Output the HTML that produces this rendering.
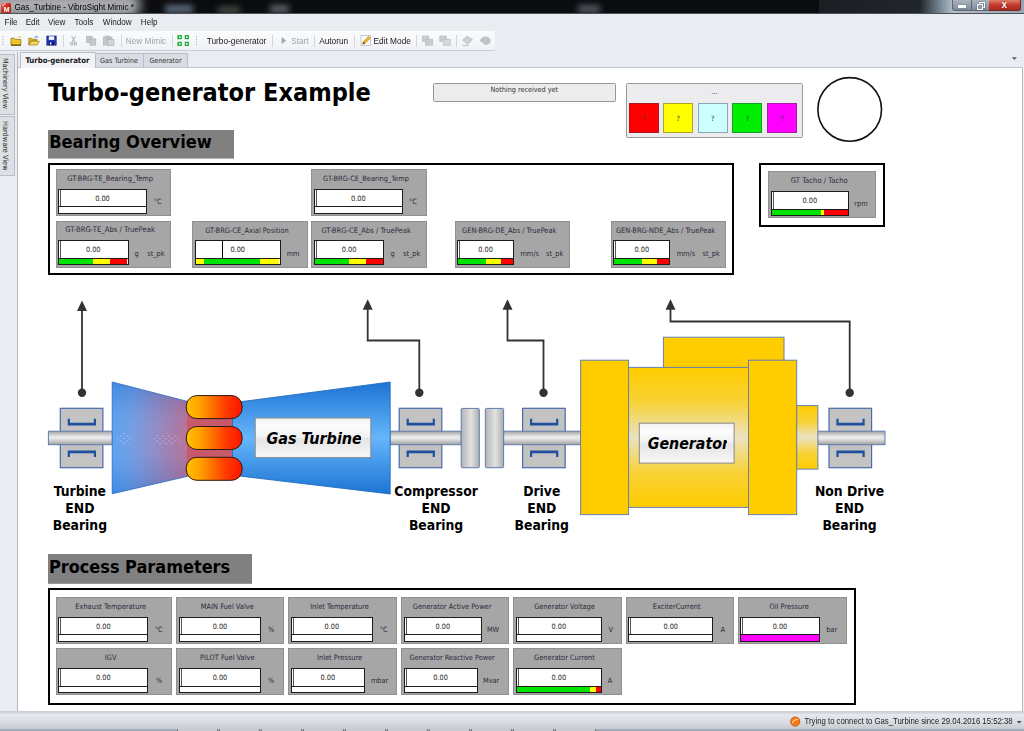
<!DOCTYPE html>
<html><head><meta charset="utf-8"><title>Gas_Turbine - VibroSight Mimic</title>
<style>
html,body{margin:0;padding:0}
body{width:1024px;height:731px;position:relative;overflow:hidden;background:#fff;font-family:"Liberation Sans","DejaVu Sans",sans-serif;font-size:11px;color:#222}
.a,.t,.wg,.vb,.br,.br i,.vl{position:absolute}
.t{white-space:pre}
svg{position:absolute;left:0;top:0}
#titlebar{left:0;top:0;width:1024px;height:14px;background:#0b0c0f;overflow:hidden}
#menubar{left:0;top:14px;width:1024px;height:17px;background:#e9ecf0}
#toolrow{left:0;top:31px;width:1024px;height:21px;background:#e9ecf0}
#toolbar{left:0;top:31px;width:495px;height:19px;background:linear-gradient(#fafbfc,#f0f2f5);border-bottom:1px solid #c9ced6;border-radius:0 0 2px 0}
#tabrow{left:0;top:52px;width:1024px;height:15px;background:#e9ecf0;border-bottom:1px solid #c2c7ce}
#side{left:0;top:52px;width:17px;height:659px;background:#e9ecf0;border-right:1px solid #b4b9c1}
#rside{left:1022px;top:67px;width:2px;height:644px;background:#f1f3f5;border-left:1px solid #b4b9c1;box-sizing:border-box}
#sbar0{left:0;top:710.5px;width:1024px;height:3.5px;background:linear-gradient(#c9ced6,#d8dce2)}
#status{left:0;top:714px;width:1024px;height:15px;background:linear-gradient(#e6e9ed,#dadde2 50%,#c8ccd2)}
#bottom{left:0;top:728.6px;width:1024px;height:3px;background:#a2acb9;overflow:hidden}
.tab{top:53.4px;height:13.6px;background:#d9dde3;border:1px solid #b9bec6;border-bottom:none;box-sizing:border-box}
.tab.act{top:52.4px;height:15.6px;background:#f1f3f6;border-color:#b9bec6;border-radius:2px 2px 0 0}
.stab{left:0;width:15.4px;background:#dde0e5;border:1px solid #b9bec6;border-left:none;box-sizing:border-box}
.sep{top:34.5px;width:1px;height:12px;background:#d3d7dc}
.hd{background:#808080;box-shadow:0 1px 0 rgba(128,128,128,.6)}
.frame{border:2px solid #000;box-sizing:border-box;background:#fff}
.wg{background:#a6a6a6;box-sizing:border-box;border:1px solid #909090}
.vb{background:linear-gradient(90deg,#fff 1.3px,#555 1.3px,#555 2.2px,#fff 2.2px);box-sizing:border-box;border:1px solid #1c1c1c}
.vb.nz{background:#fff}
.vl{top:0;width:1px;height:17.5px;background:#000}
.br{left:0;right:0;top:16.8px;bottom:0;border-top:1.8px solid #1c1c1c;background:#fff}
.br i{top:0;bottom:0;display:block}
.sq{top:103px;width:30px;height:30px;box-sizing:border-box;border:1px solid rgba(60,60,80,.45)}
</style></head><body>
<div id="titlebar" class="a">
 <div class="a" style="left:-20px;top:-8px;width:160px;height:26px;border-radius:10px;background:rgba(190,192,194,.9);filter:blur(6px)"></div>
 <div class="a" style="left:0.5px;top:3px;width:10px;height:10px;border-radius:1.5px;background:linear-gradient(135deg,#f08070,#d02818 45%,#b01808);overflow:hidden"><div class="a" style="left:3.2px;top:3px;width:6px;height:7px;font:bold 7px/1 'Liberation Sans',sans-serif;color:#fff">M</div><div class="a" style="left:1px;top:1px;width:4px;height:1px;background:#ffd0c8;transform:rotate(-40deg)"></div></div>
 <div class="a" style="left:165px;top:5px;width:28px;height:8px;background:rgba(150,175,200,.6);filter:blur(3px)"></div>
 <div class="a" style="left:218px;top:7px;width:22px;height:6px;background:rgba(150,175,150,.45);filter:blur(3px)"></div>
 <div class="a" style="left:270px;top:5px;width:19px;height:8px;background:rgba(170,185,190,.5);filter:blur(3px)"></div>
 <div class="a" style="left:578px;top:5px;width:22px;height:8px;background:rgba(170,185,200,.45);filter:blur(3px)"></div>
 <div class="a" style="left:819px;top:0;width:110px;height:14px;background:linear-gradient(90deg,#1b1f23,#22272c)"></div>
 <div class="a" style="left:920px;top:0;width:104px;height:14px;background:linear-gradient(90deg,#22272c,#8494a2 22%,#b4bec8 32%,#97a4b0)"></div>
 <div class="a" style="left:952px;top:0;width:20px;height:11px;background:linear-gradient(#a9b4bf,#7f8b97);border:1px solid #5c6670;border-top:none;box-sizing:border-box;border-radius:0 0 0 3px"></div>
 <div class="a" style="left:971.5px;top:0;width:18px;height:11px;background:linear-gradient(#a9b4bf,#7f8b97);border:1px solid #5c6670;border-top:none;border-left:none;box-sizing:border-box"></div>
 <div class="a" style="left:989px;top:0;width:32px;height:11px;background:linear-gradient(#e0806c,#c5392b 50%,#b02a20);border:1px solid #6a2a24;border-top:none;border-left:none;box-sizing:border-box;border-radius:0 0 3px 0"></div>
 <div class="a" style="left:958px;top:5.4px;width:8px;height:2.2px;background:#fff;box-shadow:0 0 1px #333"></div>
 <div class="a" style="left:978.5px;top:1.6px;width:4.5px;height:4px;border:1px solid #fff;box-shadow:0 0 1px #333"></div><div class="a" style="left:976.8px;top:3.6px;width:4.5px;height:4px;border:1px solid #fff;background:#8e99a5;box-shadow:0 0 1px #333"></div><div class="a" style="left:1001.5px;top:-0.5px;font:bold 10px/1 'Liberation Sans',sans-serif;color:#fff;text-shadow:0 0 1.5px #400">x</div>
 <div class="a" style="left:0;top:13px;width:1024px;height:1px;background:#4c5258"></div>
</div>
<div id="menubar" class="a"></div>
<div id="toolrow" class="a"></div>
<div id="toolbar" class="a"></div>
<div id="tabrow" class="a"></div>
<div id="side" class="a"></div>
<div id="rside" class="a"></div>
<div id="sbar0" class="a"></div>
<div id="status" class="a"></div>
<div id="bottom" class="a"><div class="a" style="left:177.6px;top:.4px;width:39px;height:3px;background:#c8ccd1;box-shadow:0 0 0 1px #767d87"></div><div class="a" style="left:219.6px;top:.4px;width:39px;height:3px;background:#c8ccd1;box-shadow:0 0 0 1px #767d87"></div><div class="a" style="left:261.6px;top:.4px;width:39px;height:3px;background:#c8ccd1;box-shadow:0 0 0 1px #767d87"></div><div class="a" style="left:303.6px;top:.4px;width:39px;height:3px;background:#c8ccd1;box-shadow:0 0 0 1px #767d87"></div><div class="a" style="left:345.6px;top:.4px;width:39px;height:3px;background:#c8ccd1;box-shadow:0 0 0 1px #767d87"></div><div class="a" style="left:387.6px;top:.4px;width:39px;height:3px;background:#c8ccd1;box-shadow:0 0 0 1px #767d87"></div><div class="a" style="left:429.6px;top:.4px;width:39px;height:3px;background:#c8ccd1;box-shadow:0 0 0 1px #767d87"></div><div class="a" style="left:471.6px;top:.4px;width:39px;height:3px;background:#c8ccd1;box-shadow:0 0 0 1px #767d87"></div><div class="a" style="left:513.6px;top:.4px;width:39px;height:3px;background:#c8ccd1;box-shadow:0 0 0 1px #767d87"></div><div class="a" style="left:555.6px;top:.4px;width:39px;height:3px;background:#c8ccd1;box-shadow:0 0 0 1px #767d87"></div></div>
<div class="a tab act" style="left:19.5px;width:76px"></div>
<div class="a tab" style="left:95.5px;width:48.5px;border-left:none"></div>
<div class="a tab" style="left:144px;width:44px;border-left:none"></div>
<div class="a stab" style="top:54.2px;height:61px"></div>
<div class="a stab" style="top:116.1px;height:60px"></div>
<div class="a sep" style="left:63px"></div><div class="a sep" style="left:120.5px"></div><div class="a sep" style="left:172px"></div>
<div class="a sep" style="left:272px"></div><div class="a sep" style="left:313.8px"></div><div class="a sep" style="left:354.4px"></div>
<div class="a sep" style="left:416.4px"></div><div class="a sep" style="left:456.4px"></div>
<!--ICONS-->
<div class="t" style="left:4.47px;top:18.55px;font:normal normal 8.1px/1 'Liberation Sans',sans-serif;color:#1a1a1a;transform:scaleY(1.13);transform-origin:0 84.6%">File</div><div class="t" style="left:25.67px;top:18.55px;font:normal normal 8.1px/1 'Liberation Sans',sans-serif;color:#1a1a1a;transform:scaleY(1.13);transform-origin:0 84.6%">Edit</div><div class="t" style="left:47.94px;top:18.55px;font:normal normal 8.1px/1 'Liberation Sans',sans-serif;color:#1a1a1a;transform:scaleY(1.13);transform-origin:0 84.6%">View</div><div class="t" style="left:74.45px;top:18.55px;font:normal normal 8.1px/1 'Liberation Sans',sans-serif;color:#1a1a1a;transform:scaleY(1.13);transform-origin:0 84.6%">Tools</div><div class="t" style="left:102.85px;top:18.55px;font:normal normal 8.1px/1 'Liberation Sans',sans-serif;color:#1a1a1a;transform:scaleY(1.13);transform-origin:0 84.6%">Window</div><div class="t" style="left:140.82px;top:18.55px;font:normal normal 8.1px/1 'Liberation Sans',sans-serif;color:#1a1a1a;transform:scaleY(1.13);transform-origin:0 84.6%">Help</div><div class="t" style="left:14.5px;top:3.56px;font:normal normal 8.08px/1 'Liberation Sans',sans-serif;color:#000;transform:scaleY(1.13);transform-origin:0 84.6%">Gas_Turbine - VibroSight Mimic *</div><div class="t" style="left:125.71px;top:37.18px;font:normal normal 8.3px/1 'Liberation Sans',sans-serif;color:#a0a4a8;transform:scaleY(1.13);transform-origin:0 84.6%">New Mimic</div><div class="t" style="left:206.67px;top:37.18px;font:normal normal 8.3px/1 'Liberation Sans',sans-serif;color:#1a1a1a;transform:scaleY(1.13);transform-origin:0 84.6%">Turbo-generator</div><div class="t" style="left:291.14px;top:37.18px;font:normal normal 8.3px/1 'Liberation Sans',sans-serif;color:#a0a4a8;transform:scaleY(1.13);transform-origin:0 84.6%">Start</div><div class="t" style="left:319.16px;top:37.18px;font:normal normal 8.3px/1 'Liberation Sans',sans-serif;color:#1a1a1a;transform:scaleY(1.13);transform-origin:0 84.6%">Autorun</div><div class="t" style="left:373.51px;top:37.18px;font:normal normal 8.3px/1 'Liberation Sans',sans-serif;color:#1a1a1a;transform:scaleY(1.13);transform-origin:0 84.6%">Edit Mode</div><div class="t" style="left:25.4px;top:56.55px;font:normal bold 7.74px/1 'DejaVu Sans Condensed','DejaVu Sans','Liberation Sans',sans-serif;color:#1a1a1a;">Turbo-generator</div><div class="t" style="left:100px;top:57.12px;font:normal normal 7.19px/1 'DejaVu Sans Condensed','DejaVu Sans','Liberation Sans',sans-serif;color:#333;">Gas Turbine</div><div class="t" style="left:149.4px;top:57.24px;font:normal normal 7.05px/1 'DejaVu Sans Condensed','DejaVu Sans','Liberation Sans',sans-serif;color:#333;">Generator</div><div class="t" style="left:804.6px;top:717.74px;font:normal normal 7.75px/1 'Liberation Sans',sans-serif;color:#222;transform:scaleY(1.13);transform-origin:0 84.6%">Trying to connect to Gas_Turbine since 29.04.2016 15:52:38</div><div class="t" style="left:9.39px;top:58.4px;font:7.2px/1 'DejaVu Sans Condensed','DejaVu Sans','Liberation Sans',sans-serif;color:#333;transform-origin:0 0;transform:rotate(90deg)">Machinery View</div><div class="t" style="left:9.44px;top:120.8px;font:7.34px/1 'DejaVu Sans Condensed','DejaVu Sans','Liberation Sans',sans-serif;color:#333;transform-origin:0 0;transform:rotate(90deg)">Hardware View</div>
<div class="a hd" style="left:48px;top:130px;width:186px;height:28px"></div>
<div class="a hd" style="left:48px;top:554px;width:204px;height:29px;box-shadow:0 1px 0 rgba(128,128,128,.8)"></div>
<div class="t" style="left:48px;top:80px;font:normal bold 25.06px/1 'DejaVu Sans Condensed','DejaVu Sans','Liberation Sans',sans-serif;color:#000;">Turbo-generator Example</div><div class="t" style="left:49.2px;top:132.9px;font:normal bold 18.08px/1 'DejaVu Sans Condensed','DejaVu Sans','Liberation Sans',sans-serif;color:#000;">Bearing Overview</div><div class="t" style="left:48.9px;top:557.81px;font:normal bold 17.96px/1 'DejaVu Sans Condensed','DejaVu Sans','Liberation Sans',sans-serif;color:#000;">Process Parameters</div>
<div class="a frame" style="left:48px;top:163px;width:686px;height:112px"></div>
<div class="a frame" style="left:759px;top:163px;width:126px;height:63.7px"></div>
<div class="a frame" style="left:48px;top:588px;width:808px;height:117px"></div>
<div class="wg" style="left:55.5px;top:169.3px;width:115.4px;height:47.1px"></div><div class="t" style="left:67.2px;top:175.15px;font:normal normal 7.5px/1 'DejaVu Sans Condensed','DejaVu Sans','Liberation Sans',sans-serif;color:#2b2b3b;">GT-BRG-TE_Bearing_Temp</div><div class="vb" style="left:57.9px;top:188.7px;width:89.1px;height:25px"><div class="br"></div></div><div class="t" style="left:95.14px;top:194.82px;font:normal normal 7.3px/1 'DejaVu Sans Condensed','DejaVu Sans','Liberation Sans',sans-serif;color:#222;">0.00</div><div class="t" style="left:153.7px;top:198.32px;font:normal normal 7.3px/1 'DejaVu Sans Condensed','DejaVu Sans','Liberation Sans',sans-serif;color:#2b2b3b;">°C</div>
<div class="wg" style="left:311.4px;top:169.3px;width:115.4px;height:47.1px"></div><div class="t" style="left:323.1px;top:175.25px;font:normal normal 7.39px/1 'DejaVu Sans Condensed','DejaVu Sans','Liberation Sans',sans-serif;color:#2b2b3b;">GT-BRG-CE_Bearing_Temp</div><div class="vb" style="left:313.8px;top:188.7px;width:89.1px;height:25px"><div class="br"></div></div><div class="t" style="left:351.04px;top:194.82px;font:normal normal 7.3px/1 'DejaVu Sans Condensed','DejaVu Sans','Liberation Sans',sans-serif;color:#222;">0.00</div><div class="t" style="left:409px;top:198.32px;font:normal normal 7.3px/1 'DejaVu Sans Condensed','DejaVu Sans','Liberation Sans',sans-serif;color:#2b2b3b;">°C</div>
<div class="wg" style="left:55.5px;top:220.7px;width:115.4px;height:47.1px"></div><div class="t" style="left:65.3px;top:226.41px;font:normal normal 7.67px/1 'DejaVu Sans Condensed','DejaVu Sans','Liberation Sans',sans-serif;color:#2b2b3b;">GT-BRG-TE_Abs / TruePeak</div><div class="vb" style="left:57.9px;top:240.1px;width:70.7px;height:25px"><div class="br"><i style="left:0px;width:34px;background:#00e400"></i><i style="left:34px;width:17.5px;background:#ffff00"></i><i style="left:51.5px;width:16.8px;background:#ff0000"></i></div></div><div class="t" style="left:85.94px;top:246.22px;font:normal normal 7.3px/1 'DejaVu Sans Condensed','DejaVu Sans','Liberation Sans',sans-serif;color:#222;">0.00</div><div class="t" style="left:134.5px;top:249.72px;font:normal normal 7.3px/1 'DejaVu Sans Condensed','DejaVu Sans','Liberation Sans',sans-serif;color:#2b2b3b;">g</div><div class="t" style="left:147.3px;top:249.72px;font:normal normal 7.3px/1 'DejaVu Sans Condensed','DejaVu Sans','Liberation Sans',sans-serif;color:#2b2b3b;">st_pk</div>
<div class="wg" style="left:192.3px;top:220.7px;width:115.4px;height:47.1px"></div><div class="t" style="left:205.18px;top:226.64px;font:normal normal 7.4px/1 'DejaVu Sans Condensed','DejaVu Sans','Liberation Sans',sans-serif;color:#2b2b3b;">GT-BRG-CE_Axial Position</div><div class="vb nz" style="left:194.7px;top:240.1px;width:86px;height:25px"><div class="vl" style="left:26px"></div><div class="br"><i style="left:0px;width:8px;background:#ffff00"></i><i style="left:8px;width:56.5px;background:#00e400"></i><i style="left:64.5px;width:19.1px;background:#ffff00"></i></div></div><div class="t" style="left:230.39px;top:246.22px;font:normal normal 7.3px/1 'DejaVu Sans Condensed','DejaVu Sans','Liberation Sans',sans-serif;color:#222;">0.00</div><div class="t" style="left:286.7px;top:249.72px;font:normal normal 7.3px/1 'DejaVu Sans Condensed','DejaVu Sans','Liberation Sans',sans-serif;color:#2b2b3b;">mm</div>
<div class="wg" style="left:311.4px;top:220.7px;width:115.4px;height:47.1px"></div><div class="t" style="left:321.2px;top:226.5px;font:normal normal 7.56px/1 'DejaVu Sans Condensed','DejaVu Sans','Liberation Sans',sans-serif;color:#2b2b3b;">GT-BRG-CE_Abs / TruePeak</div><div class="vb" style="left:313.8px;top:240.1px;width:70.7px;height:25px"><div class="br"><i style="left:0px;width:34px;background:#00e400"></i><i style="left:34px;width:17.5px;background:#ffff00"></i><i style="left:51.5px;width:16.8px;background:#ff0000"></i></div></div><div class="t" style="left:341.84px;top:246.22px;font:normal normal 7.3px/1 'DejaVu Sans Condensed','DejaVu Sans','Liberation Sans',sans-serif;color:#222;">0.00</div><div class="t" style="left:390.4px;top:249.72px;font:normal normal 7.3px/1 'DejaVu Sans Condensed','DejaVu Sans','Liberation Sans',sans-serif;color:#2b2b3b;">g</div><div class="t" style="left:403px;top:249.72px;font:normal normal 7.3px/1 'DejaVu Sans Condensed','DejaVu Sans','Liberation Sans',sans-serif;color:#2b2b3b;">st_pk</div>
<div class="wg" style="left:454.6px;top:220.7px;width:115.4px;height:47.1px"></div><div class="t" style="left:462.08px;top:226.64px;font:normal normal 7.4px/1 'DejaVu Sans Condensed','DejaVu Sans','Liberation Sans',sans-serif;color:#2b2b3b;">GEN-BRG-DE_Abs / TruePeak</div><div class="vb" style="left:457px;top:240.1px;width:57.2px;height:25px"><div class="br"><i style="left:0px;width:28px;background:#00e400"></i><i style="left:28px;width:15px;background:#ffff00"></i><i style="left:43px;width:11.8px;background:#ff0000"></i></div></div><div class="t" style="left:478.29px;top:246.22px;font:normal normal 7.3px/1 'DejaVu Sans Condensed','DejaVu Sans','Liberation Sans',sans-serif;color:#222;">0.00</div><div class="t" style="left:520.4px;top:249.72px;font:normal normal 7.3px/1 'DejaVu Sans Condensed','DejaVu Sans','Liberation Sans',sans-serif;color:#2b2b3b;">mm/s</div><div class="t" style="left:546.1px;top:249.72px;font:normal normal 7.3px/1 'DejaVu Sans Condensed','DejaVu Sans','Liberation Sans',sans-serif;color:#2b2b3b;">st_pk</div>
<div class="wg" style="left:610.9px;top:220.7px;width:115.4px;height:47.1px"></div><div class="t" style="left:615.89px;top:226.64px;font:normal normal 7.4px/1 'DejaVu Sans Condensed','DejaVu Sans','Liberation Sans',sans-serif;color:#2b2b3b;">GEN-BRG-NDE_Abs / TruePeak</div><div class="vb" style="left:613.3px;top:240.1px;width:57.2px;height:25px"><div class="br"><i style="left:0px;width:28px;background:#00e400"></i><i style="left:28px;width:15px;background:#ffff00"></i><i style="left:43px;width:11.8px;background:#ff0000"></i></div></div><div class="t" style="left:634.59px;top:246.22px;font:normal normal 7.3px/1 'DejaVu Sans Condensed','DejaVu Sans','Liberation Sans',sans-serif;color:#222;">0.00</div><div class="t" style="left:676.7px;top:249.72px;font:normal normal 7.3px/1 'DejaVu Sans Condensed','DejaVu Sans','Liberation Sans',sans-serif;color:#2b2b3b;">mm/s</div><div class="t" style="left:702.5px;top:249.72px;font:normal normal 7.3px/1 'DejaVu Sans Condensed','DejaVu Sans','Liberation Sans',sans-serif;color:#2b2b3b;">st_pk</div>
<div class="wg" style="left:768.3px;top:171.4px;width:107.9px;height:46.8px"></div><div class="t" style="left:790.75px;top:177.15px;font:normal normal 7.63px/1 'DejaVu Sans Condensed','DejaVu Sans','Liberation Sans',sans-serif;color:#2b2b3b;">GT Tacho / Tacho</div><div class="vb" style="left:770.7px;top:190.8px;width:78.4px;height:25px"><div class="br"><i style="left:0px;width:49px;background:#00e400"></i><i style="left:49px;width:3px;background:#ffff00"></i><i style="left:52px;width:24px;background:#ff0000"></i></div></div><div class="t" style="left:802.59px;top:196.92px;font:normal normal 7.3px/1 'DejaVu Sans Condensed','DejaVu Sans','Liberation Sans',sans-serif;color:#222;">0.00</div><div class="t" style="left:854.3px;top:200.42px;font:normal normal 7.3px/1 'DejaVu Sans Condensed','DejaVu Sans','Liberation Sans',sans-serif;color:#2b2b3b;">rpm</div>
<div class="wg" style="left:55.7px;top:597.2px;width:116px;height:47px"></div><div class="t" style="left:75.25px;top:603.14px;font:normal normal 7.4px/1 'DejaVu Sans Condensed','DejaVu Sans','Liberation Sans',sans-serif;color:#2b2b3b;">Exhaust Temperature</div><div class="vb" style="left:58.1px;top:616.6px;width:90.4px;height:25px"><div class="br"></div></div><div class="t" style="left:95.99px;top:622.72px;font:normal normal 7.3px/1 'DejaVu Sans Condensed','DejaVu Sans','Liberation Sans',sans-serif;color:#222;">0.00</div><div class="t" style="left:154.7px;top:626.22px;font:normal normal 7.3px/1 'DejaVu Sans Condensed','DejaVu Sans','Liberation Sans',sans-serif;color:#2b2b3b;">°C</div>
<div class="wg" style="left:176.3px;top:597.2px;width:108.1px;height:47px"></div><div class="t" style="left:200.85px;top:603.14px;font:normal normal 7.4px/1 'DejaVu Sans Condensed','DejaVu Sans','Liberation Sans',sans-serif;color:#2b2b3b;">MAIN Fuel Valve</div><div class="vb" style="left:178.7px;top:616.6px;width:82.6px;height:25px"><div class="br"></div></div><div class="t" style="left:212.69px;top:622.72px;font:normal normal 7.3px/1 'DejaVu Sans Condensed','DejaVu Sans','Liberation Sans',sans-serif;color:#222;">0.00</div><div class="t" style="left:267.9px;top:626.22px;font:normal normal 7.3px/1 'DejaVu Sans Condensed','DejaVu Sans','Liberation Sans',sans-serif;color:#2b2b3b;">%</div>
<div class="wg" style="left:288.4px;top:597.2px;width:108.4px;height:47px"></div><div class="t" style="left:310.16px;top:603.14px;font:normal normal 7.4px/1 'DejaVu Sans Condensed','DejaVu Sans','Liberation Sans',sans-serif;color:#2b2b3b;">Inlet Temperature</div><div class="vb" style="left:290.8px;top:616.6px;width:82.1px;height:25px"><div class="br"></div></div><div class="t" style="left:324.54px;top:622.72px;font:normal normal 7.3px/1 'DejaVu Sans Condensed','DejaVu Sans','Liberation Sans',sans-serif;color:#222;">0.00</div><div class="t" style="left:379.7px;top:626.22px;font:normal normal 7.3px/1 'DejaVu Sans Condensed','DejaVu Sans','Liberation Sans',sans-serif;color:#2b2b3b;">°C</div>
<div class="wg" style="left:401.1px;top:597.2px;width:108.1px;height:47px"></div><div class="t" style="left:412.79px;top:603.14px;font:normal normal 7.4px/1 'DejaVu Sans Condensed','DejaVu Sans','Liberation Sans',sans-serif;color:#2b2b3b;">Generator Active Power</div><div class="vb" style="left:403.5px;top:616.6px;width:78.6px;height:25px"><div class="br"></div></div><div class="t" style="left:435.49px;top:622.72px;font:normal normal 7.3px/1 'DejaVu Sans Condensed','DejaVu Sans','Liberation Sans',sans-serif;color:#222;">0.00</div><div class="t" style="left:486.9px;top:626.22px;font:normal normal 7.3px/1 'DejaVu Sans Condensed','DejaVu Sans','Liberation Sans',sans-serif;color:#2b2b3b;">MW</div>
<div class="wg" style="left:513.4px;top:597.2px;width:108.3px;height:47px"></div><div class="t" style="left:534.13px;top:603.14px;font:normal normal 7.4px/1 'DejaVu Sans Condensed','DejaVu Sans','Liberation Sans',sans-serif;color:#2b2b3b;">Generator Voltage</div><div class="vb" style="left:515.8px;top:616.6px;width:86px;height:25px"><div class="br"></div></div><div class="t" style="left:551.49px;top:622.72px;font:normal normal 7.3px/1 'DejaVu Sans Condensed','DejaVu Sans','Liberation Sans',sans-serif;color:#222;">0.00</div><div class="t" style="left:608.4px;top:626.22px;font:normal normal 7.3px/1 'DejaVu Sans Condensed','DejaVu Sans','Liberation Sans',sans-serif;color:#2b2b3b;">V</div>
<div class="wg" style="left:625.7px;top:597.2px;width:108px;height:47px"></div><div class="t" style="left:652.73px;top:603.14px;font:normal normal 7.4px/1 'DejaVu Sans Condensed','DejaVu Sans','Liberation Sans',sans-serif;color:#2b2b3b;">ExciterCurrent</div><div class="vb" style="left:628.1px;top:616.6px;width:85.3px;height:25px"><div class="br"></div></div><div class="t" style="left:663.44px;top:622.72px;font:normal normal 7.3px/1 'DejaVu Sans Condensed','DejaVu Sans','Liberation Sans',sans-serif;color:#222;">0.00</div><div class="t" style="left:720.4px;top:626.22px;font:normal normal 7.3px/1 'DejaVu Sans Condensed','DejaVu Sans','Liberation Sans',sans-serif;color:#2b2b3b;">A</div>
<div class="wg" style="left:737.7px;top:597.2px;width:109.1px;height:47px"></div><div class="t" style="left:769.53px;top:603.14px;font:normal normal 7.4px/1 'DejaVu Sans Condensed','DejaVu Sans','Liberation Sans',sans-serif;color:#2b2b3b;">Oil Pressure</div><div class="vb" style="left:740.1px;top:616.6px;width:79.8px;height:25px"><div class="br"><i style="left:0px;width:77.8px;background:#ff00ff"></i></div></div><div class="t" style="left:772.69px;top:622.72px;font:normal normal 7.3px/1 'DejaVu Sans Condensed','DejaVu Sans','Liberation Sans',sans-serif;color:#222;">0.00</div><div class="t" style="left:826.2px;top:626.22px;font:normal normal 7.3px/1 'DejaVu Sans Condensed','DejaVu Sans','Liberation Sans',sans-serif;color:#2b2b3b;">bar</div>
<div class="wg" style="left:55.7px;top:648.4px;width:116px;height:47px"></div><div class="t" style="left:104.86px;top:654.34px;font:normal normal 7.4px/1 'DejaVu Sans Condensed','DejaVu Sans','Liberation Sans',sans-serif;color:#2b2b3b;">IGV</div><div class="vb" style="left:58.1px;top:667.8px;width:90.4px;height:25px"><div class="br"></div></div><div class="t" style="left:95.99px;top:673.92px;font:normal normal 7.3px/1 'DejaVu Sans Condensed','DejaVu Sans','Liberation Sans',sans-serif;color:#222;">0.00</div><div class="t" style="left:156px;top:677.42px;font:normal normal 7.3px/1 'DejaVu Sans Condensed','DejaVu Sans','Liberation Sans',sans-serif;color:#2b2b3b;">%</div>
<div class="wg" style="left:176.3px;top:648.4px;width:108.1px;height:47px"></div><div class="t" style="left:200.11px;top:654.34px;font:normal normal 7.4px/1 'DejaVu Sans Condensed','DejaVu Sans','Liberation Sans',sans-serif;color:#2b2b3b;">PILOT Fuel Valve</div><div class="vb" style="left:178.7px;top:667.8px;width:82.6px;height:25px"><div class="br"></div></div><div class="t" style="left:212.69px;top:673.92px;font:normal normal 7.3px/1 'DejaVu Sans Condensed','DejaVu Sans','Liberation Sans',sans-serif;color:#222;">0.00</div><div class="t" style="left:267.9px;top:677.42px;font:normal normal 7.3px/1 'DejaVu Sans Condensed','DejaVu Sans','Liberation Sans',sans-serif;color:#2b2b3b;">%</div>
<div class="wg" style="left:288.4px;top:648.4px;width:108.4px;height:47px"></div><div class="t" style="left:316.98px;top:654.34px;font:normal normal 7.4px/1 'DejaVu Sans Condensed','DejaVu Sans','Liberation Sans',sans-serif;color:#2b2b3b;">Inlet Pressure</div><div class="vb" style="left:290.8px;top:667.8px;width:74px;height:25px"><div class="br"></div></div><div class="t" style="left:320.49px;top:673.92px;font:normal normal 7.3px/1 'DejaVu Sans Condensed','DejaVu Sans','Liberation Sans',sans-serif;color:#222;">0.00</div><div class="t" style="left:370.9px;top:677.42px;font:normal normal 7.3px/1 'DejaVu Sans Condensed','DejaVu Sans','Liberation Sans',sans-serif;color:#2b2b3b;">mbar</div>
<div class="wg" style="left:401.1px;top:648.4px;width:108.1px;height:47px"></div><div class="t" style="left:409.4px;top:654.43px;font:normal normal 7.29px/1 'DejaVu Sans Condensed','DejaVu Sans','Liberation Sans',sans-serif;color:#2b2b3b;">Generator Reactive Power</div><div class="vb" style="left:403.5px;top:667.8px;width:74.3px;height:25px"><div class="br"></div></div><div class="t" style="left:433.34px;top:673.92px;font:normal normal 7.3px/1 'DejaVu Sans Condensed','DejaVu Sans','Liberation Sans',sans-serif;color:#222;">0.00</div><div class="t" style="left:483px;top:677.42px;font:normal normal 7.3px/1 'DejaVu Sans Condensed','DejaVu Sans','Liberation Sans',sans-serif;color:#2b2b3b;">Mvar</div>
<div class="wg" style="left:513.4px;top:648.4px;width:108.3px;height:47px"></div><div class="t" style="left:534.1px;top:654.34px;font:normal normal 7.4px/1 'DejaVu Sans Condensed','DejaVu Sans','Liberation Sans',sans-serif;color:#2b2b3b;">Generator Current</div><div class="vb" style="left:515.8px;top:667.8px;width:86px;height:25px"><div class="br"><i style="left:0px;width:73px;background:#00e400"></i><i style="left:73px;width:6.4px;background:#ffff00"></i><i style="left:79.4px;width:4.6px;background:#ff0000"></i></div></div><div class="t" style="left:551.49px;top:673.92px;font:normal normal 7.3px/1 'DejaVu Sans Condensed','DejaVu Sans','Liberation Sans',sans-serif;color:#222;">0.00</div><div class="t" style="left:607.7px;top:677.42px;font:normal normal 7.3px/1 'DejaVu Sans Condensed','DejaVu Sans','Liberation Sans',sans-serif;color:#2b2b3b;">A</div>
<div class="a" style="left:433px;top:83px;width:182.5px;height:18.5px;box-sizing:border-box;background:#ececec;border:1px solid #969696;border-radius:1.5px"></div>
<div class="a" style="left:626px;top:83px;width:177px;height:54.5px;box-sizing:border-box;background:#ececef;border:1px solid #9a9a9a;border-radius:1.5px"></div>
<div class="a sq" style="left:628.6px;background:#ff0000"></div>
<div class="a sq" style="left:663.2px;background:#ffff00"></div>
<div class="a sq" style="left:697.8px;background:#ccffff"></div>
<div class="a sq" style="left:732.4px;background:#00ee00"></div>
<div class="a sq" style="left:767px;background:#ff00ff"></div>
<div class="t" style="left:490.44px;top:86.41px;font:normal normal 7.2px/1 'DejaVu Sans Condensed','DejaVu Sans','Liberation Sans',sans-serif;color:#333;">Nothing received yet</div><div class="t" style="left:711.33px;top:88.24px;font:normal normal 7.4px/1 'DejaVu Sans Condensed','DejaVu Sans','Liberation Sans',sans-serif;color:#333;">...</div><div class="t" style="left:641.88px;top:114.51px;font:normal normal 7.2px/1 'DejaVu Sans Condensed','DejaVu Sans','Liberation Sans',sans-serif;color:#333;">?</div><div class="t" style="left:676.48px;top:114.51px;font:normal normal 7.2px/1 'DejaVu Sans Condensed','DejaVu Sans','Liberation Sans',sans-serif;color:#333;">?</div><div class="t" style="left:711.08px;top:114.51px;font:normal normal 7.2px/1 'DejaVu Sans Condensed','DejaVu Sans','Liberation Sans',sans-serif;color:#333;">?</div><div class="t" style="left:745.68px;top:114.51px;font:normal normal 7.2px/1 'DejaVu Sans Condensed','DejaVu Sans','Liberation Sans',sans-serif;color:#333;">?</div><div class="t" style="left:780.28px;top:114.51px;font:normal normal 7.2px/1 'DejaVu Sans Condensed','DejaVu Sans','Liberation Sans',sans-serif;color:#333;">?</div>
<svg width="1024" height="731" viewBox="0 0 1024 731">
<defs>
<linearGradient id="sh" x1="0" y1="0" x2="0" y2="1"><stop offset="0" stop-color="#a2a2a2"/><stop offset=".42" stop-color="#ececec"/><stop offset=".58" stop-color="#e4e4e4"/><stop offset="1" stop-color="#9e9e9e"/></linearGradient>
<linearGradient id="cp" x1="0" y1="0" x2="1" y2="0"><stop offset="0" stop-color="#b4b4b4"/><stop offset=".55" stop-color="#e2e2e2"/><stop offset="1" stop-color="#adadad"/></linearGradient>
<linearGradient id="lcH" x1="0" y1="0" x2="1" y2="0"><stop offset="0" stop-color="#4c9af0"/><stop offset=".3" stop-color="#6a93de"/><stop offset=".6" stop-color="#8a7ebc"/><stop offset=".85" stop-color="#a26c9e"/><stop offset="1" stop-color="#b2648a"/></linearGradient>
<linearGradient id="lcV" x1="0" y1="0" x2="0" y2="1"><stop offset="0" stop-color="#1060c0" stop-opacity=".28"/><stop offset=".5" stop-color="#ffffff" stop-opacity=".1"/><stop offset="1" stop-color="#1060c0" stop-opacity=".28"/></linearGradient>
<linearGradient id="rcV" x1="0" y1="0" x2="0" y2="1"><stop offset="0" stop-color="#1c74d4"/><stop offset=".5" stop-color="#66b6fb"/><stop offset="1" stop-color="#1c74d4"/></linearGradient>
<linearGradient id="can" x1="0" y1="0" x2="1" y2="0"><stop offset="0" stop-color="#ffc000"/><stop offset=".25" stop-color="#ffa000"/><stop offset=".7" stop-color="#ff3c00"/><stop offset="1" stop-color="#ff1400"/></linearGradient>
<linearGradient id="gb" x1="0" y1="0" x2="0" y2="1"><stop offset="0" stop-color="#ffcc00"/><stop offset=".25" stop-color="#f8d236"/><stop offset=".5" stop-color="#ebe2c2"/><stop offset=".75" stop-color="#f8d236"/><stop offset="1" stop-color="#ffcc00"/></linearGradient>
<linearGradient id="lb" x1="0" y1="0" x2="0" y2="1"><stop offset="0" stop-color="#f1f1f1"/><stop offset=".2" stop-color="#fcfcfc"/><stop offset=".47" stop-color="#f2f2f2"/><stop offset=".53" stop-color="#e5e5e5"/><stop offset="1" stop-color="#f7f7f7"/></linearGradient>
<pattern id="dots" width="6" height="5" patternUnits="userSpaceOnUse"><circle cx="1" cy="1" r=".5" fill="#fff" fill-opacity=".75"/><circle cx="4" cy="3.5" r=".5" fill="#fff" fill-opacity=".75"/></pattern>
<g id="brg">
 <rect x="0" y="0" width="42.6" height="59.4" fill="#c3c3c3" stroke="#4a6aaa" stroke-width="1.2"/>
 <path d="M7.4 10.4H9.6V14.4H33.5V10.4H35.700V17.2H7.4Z" fill="#1f4f9f"/>
 <path d="M7.4 42.2H35.700V48.8H33.5V45H9.6V48.8H7.4Z" fill="#1f4f9f"/>
</g>
</defs>
<!-- arrows -->
<g fill="none" stroke="#333" stroke-width="1.8">
<path d="M82 392V309"/>
<path d="M419.3 392V340.5H367.7V309"/>
<path d="M543.5 392V340.5H507.5V309"/>
<path d="M849.7 392V321.5H670.5V308"/>
</g>
<g fill="#333">
<circle cx="82" cy="392.8" r="4.2"/><circle cx="419.3" cy="392.8" r="4.2"/><circle cx="543.5" cy="392.8" r="4.2"/><circle cx="849.7" cy="392.8" r="4.2"/>
<path d="M82 300.4l5 10.5h-10z"/><path d="M367.7 299.2l5 10.5h-10z"/><path d="M507.5 299.2l5 10.5h-10z"/><path d="M670.5 299.3l5 10.5h-10z"/>
</g>
<!-- bearings -->
<use href="#brg" x="60.3" y="408.3"/><use href="#brg" x="399.2" y="408.3"/><use href="#brg" x="522.6" y="408.3"/><use href="#brg" x="829" y="408.3"/>
<!-- shafts -->
<g stroke="#5f7cb0" stroke-width="1">
<rect x="48.4" y="431.2" width="64" height="13.5" fill="url(#sh)"/>
<rect x="390" y="431.2" width="71.2" height="13.5" fill="url(#sh)"/>
<rect x="503.6" y="431.2" width="77" height="13.5" fill="url(#sh)"/>
<rect x="817" y="431.2" width="68" height="13.5" fill="url(#sh)"/>
<rect x="461.2" y="408.4" width="18.1" height="59.3" rx="1" fill="url(#cp)"/>
<rect x="485.3" y="408.4" width="18.3" height="59.3" rx="1" fill="url(#cp)"/>
</g>
<!-- turbine -->
<path d="M112.2 382L187.5 401.4V476.3L112.2 493.8Z" fill="url(#lcH)"/>
<path d="M112.2 382L187.5 401.4V476.3L112.2 493.8Z" fill="url(#lcV)" stroke="#2a6cc0" stroke-width=".8"/>
<ellipse cx="124.5" cy="439" rx="8.5" ry="6.5" fill="url(#dots)"/><ellipse cx="167" cy="439" rx="15.5" ry="5.5" fill="url(#dots)"/>
<rect x="187" y="401.4" width="46" height="74.9" fill="#c8586c"/>
<path d="M232.5 402.8L390.2 382V494L232.5 475.2Z" fill="url(#rcV)" stroke="#1c64b8" stroke-width=".8"/>
<g fill="url(#can)" stroke="#2a1a10" stroke-width="1">
<rect x="186.3" y="395.6" width="55.8" height="23" rx="10.5"/>
<rect x="186.3" y="426.5" width="55.8" height="23" rx="10.5"/>
<rect x="186.3" y="457.3" width="55.8" height="23" rx="10.5"/>
</g>
<rect x="255.2" y="418" width="115.6" height="39.6" fill="url(#lb)" stroke="#8a8a8a" stroke-width="1"/>
<!-- generator -->
<g stroke="#6480ae" stroke-width="1">
<rect x="663.4" y="337.2" width="120.6" height="31" fill="#ffcc00"/>
<rect x="628" y="367.4" width="121" height="140" fill="url(#gb)"/>
<rect x="580.6" y="360.2" width="48" height="154.4" fill="#ffcc00"/>
<rect x="748.5" y="360.2" width="48.2" height="154.4" fill="#ffcc00"/>
<rect x="796.7" y="405.6" width="21.2" height="63.5" fill="url(#gb)"/>
</g>
<rect x="639.3" y="423.2" width="94.8" height="39.9" fill="url(#lb)" stroke="#8a8a8a" stroke-width="1"/>
<circle cx="849.7" cy="109.4" r="31.8" fill="#fff" stroke="#111" stroke-width="1.6"/>

<!-- toolbar icons -->
<g id="icons">
<g fill="#9aa0a8"><rect x="2.3" y="36" width="1" height="1"/><rect x="2.3" y="38.6" width="1" height="1"/><rect x="2.3" y="41.2" width="1" height="1"/><rect x="2.3" y="43.8" width="1" height="1"/>
<rect x="196" y="36" width="1" height="1"/><rect x="196" y="38.6" width="1" height="1"/><rect x="196" y="41.2" width="1" height="1"/><rect x="196" y="43.8" width="1" height="1"/></g>
<path d="M11 45V38.2h3.2l1 1.2h5.6V45z" fill="#f2c428" stroke="#8a6a10" stroke-width=".7"/>
<path d="M11 45.2h10" stroke="#4a3a08" stroke-width="1"/>
<path d="M17.5 37.8l1.8-1.8 1.6 1.8" fill="#fff3a0" stroke="#d8a818" stroke-width=".6"/>
<path d="M28.8 45V38.2h3l1 1.1h4.2V41H31l-2.2 4z" fill="#e8b820" stroke="#8a6a10" stroke-width=".6"/>
<path d="M28.8 45l2.4-3.8h8.2L37.2 45z" fill="#f8d858" stroke="#8a6a10" stroke-width=".6"/>
<path d="M34.5 37.2q2-1.4 3.6 .2" fill="none" stroke="#3868c8" stroke-width=".9"/>
<rect x="46.8" y="36" width="9.4" height="9.2" fill="#2238c0" stroke="#101870" stroke-width=".6"/>
<rect x="48.8" y="36.3" width="5.4" height="3.6" fill="#f4f6ff"/>
<rect x="49.2" y="41.6" width="4.8" height="3.4" fill="#0c1460"/><rect x="50" y="42.2" width="1.4" height="2.4" fill="#e8e8ff"/>
<g fill="none" stroke="#a4a8ae" stroke-width="1"><path d="M71.6 36.2l3.6 6.4M75.4 36.2l-3.6 6.4"/><circle cx="71.6" cy="43.8" r="1.3"/><circle cx="75.4" cy="43.8" r="1.3"/></g>
<g fill="#c4c7cb" stroke="#a9adb2" stroke-width=".6"><rect x="86.4" y="36.2" width="5.6" height="6.2"/><rect x="90" y="38.8" width="5.8" height="6.4"/>
<rect x="103.4" y="37" width="8.6" height="8"/><rect x="105.6" y="36" width="4.2" height="2.2"/><rect x="107.6" y="39.6" width="6.4" height="5.8" fill="#d0d3d6"/></g>
<g fill="#1cb838" stroke="#0e8a24" stroke-width=".4"><rect x="177.8" y="35.2" width="3.8" height="3.8"/><rect x="185" y="35.2" width="3.8" height="3.8"/><rect x="177.8" y="42" width="3.8" height="3.8"/><rect x="185" y="42" width="3.8" height="3.8"/></g>
<g fill="#e8fbe8"><rect x="179" y="36.4" width="1.6" height="1.6"/><rect x="186" y="36.4" width="1.6" height="1.6"/><rect x="179" y="43" width="1.6" height="1.6"/><rect x="186" y="43" width="1.6" height="1.6"/></g>
<path d="M281.6 37v7.2l4.4-3.6z" fill="#a2a6ac"/>
<rect x="361" y="35.6" width="9.6" height="10" fill="#fdfdfd" stroke="#b0b4ba" stroke-width=".7"/>
<path d="M362.6 44.2l.8-2.6 5.2-5.4 1.8 1.8-5.2 5.4z" fill="#f0b428" stroke="#b07808" stroke-width=".5"/>
<path d="M362.6 44.2l.8-2.6 1.8 1.8z" fill="#7a4a10"/>
<g fill="#c9ccd0" stroke="#b0b4b9" stroke-width=".5"><rect x="422.2" y="36" width="6.6" height="5.4"/><rect x="425.6" y="39.2" width="7.2" height="6"/>
<rect x="439.8" y="36" width="6.6" height="5.4"/><rect x="443.2" y="39.2" width="7.2" height="6" fill="#d6d8db"/></g>
<g fill="#d0d3d6" stroke="#a9adb2" stroke-width=".7"><path d="M462.6 40.2l4.4-4 5.4 3.4-4.6 4.6z"/><path d="M462.4 45.4h6.4" /></g>
<path d="M480 40.4q1.4-4 6-4 4.6.6 4.6 4.4 0 3.600-4.600 4.200-2.200 0-3.200-2.200-2.200-.400-2.800-2.400z" fill="#bfc2c6"/>
<circle cx="795.2" cy="721.6" r="4.6" fill="#f47a18" stroke="#c85000" stroke-width=".8"/>
<path d="M792.6 723.2q1.200-4.200 5.200-3.600" fill="none" stroke="#ffe0b0" stroke-width="1.1"/>
<path d="M1016.8 721l2.400 2.600 2.400-2.600z" fill="#444"/>
<path d="M1011.8 57.200l2.600 2.800 2.600-2.800z" fill="#5a5e64"/>
</g>
</svg>

<div class="t" style="left:53.74px;top:485.03px;font:normal bold 13.8px/1 'DejaVu Sans Condensed','DejaVu Sans','Liberation Sans',sans-serif;color:#000;">Turbine</div><div class="t" style="left:65.31px;top:502.13px;font:normal bold 13.8px/1 'DejaVu Sans Condensed','DejaVu Sans','Liberation Sans',sans-serif;color:#000;">END</div><div class="t" style="left:52.72px;top:519.23px;font:normal bold 13.8px/1 'DejaVu Sans Condensed','DejaVu Sans','Liberation Sans',sans-serif;color:#000;">Bearing</div><div class="t" style="left:394.37px;top:485.03px;font:normal bold 13.8px/1 'DejaVu Sans Condensed','DejaVu Sans','Liberation Sans',sans-serif;color:#000;">Compressor</div><div class="t" style="left:421.51px;top:502.13px;font:normal bold 13.8px/1 'DejaVu Sans Condensed','DejaVu Sans','Liberation Sans',sans-serif;color:#000;">END</div><div class="t" style="left:408.92px;top:519.23px;font:normal bold 13.8px/1 'DejaVu Sans Condensed','DejaVu Sans','Liberation Sans',sans-serif;color:#000;">Bearing</div><div class="t" style="left:523.2px;top:485.03px;font:normal bold 13.8px/1 'DejaVu Sans Condensed','DejaVu Sans','Liberation Sans',sans-serif;color:#000;">Drive</div><div class="t" style="left:527.21px;top:502.13px;font:normal bold 13.8px/1 'DejaVu Sans Condensed','DejaVu Sans','Liberation Sans',sans-serif;color:#000;">END</div><div class="t" style="left:514.62px;top:519.23px;font:normal bold 13.8px/1 'DejaVu Sans Condensed','DejaVu Sans','Liberation Sans',sans-serif;color:#000;">Bearing</div><div class="t" style="left:814.96px;top:485.03px;font:normal bold 13.8px/1 'DejaVu Sans Condensed','DejaVu Sans','Liberation Sans',sans-serif;color:#000;">Non Drive</div><div class="t" style="left:835.01px;top:502.13px;font:normal bold 13.8px/1 'DejaVu Sans Condensed','DejaVu Sans','Liberation Sans',sans-serif;color:#000;">END</div><div class="t" style="left:822.42px;top:519.23px;font:normal bold 13.8px/1 'DejaVu Sans Condensed','DejaVu Sans','Liberation Sans',sans-serif;color:#000;">Bearing</div><div class="a" style="left:266.4px;top:428.66px;width:94.8px;height:22px;overflow:hidden"><div class="t" style="left:0;top:2px;font:italic bold 16px/1 'DejaVu Sans Condensed','DejaVu Sans','Liberation Sans',sans-serif;color:#000">Gas Turbine</div></div><div class="a" style="left:647.8px;top:433.93px;width:79.1px;height:21.8px;overflow:hidden"><div class="t" style="left:0;top:2px;font:italic bold 15.8px/1 'DejaVu Sans Condensed','DejaVu Sans','Liberation Sans',sans-serif;color:#000">Generator</div></div>
</body></html>
